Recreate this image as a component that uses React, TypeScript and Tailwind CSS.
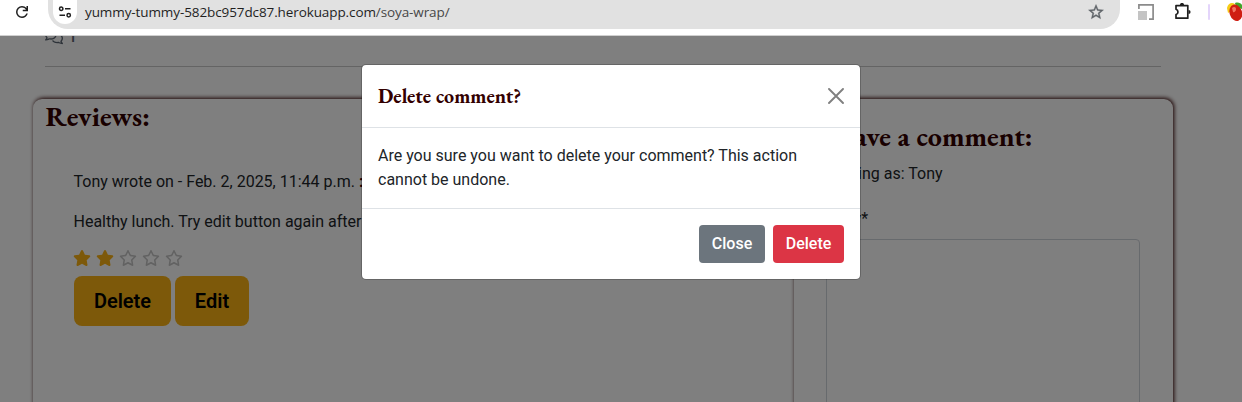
import type { ReactNode } from "react";
import { FaRegComments, FaRegStar, FaStar } from "react-icons/fa6";

const RATING = 2;

function BrowserBar() {
  return (
    <header className="relative flex h-9 shrink-0 items-start border-b border-[#d0d0d0] bg-white">
      <svg className="ml-[13px] mt-[3px] size-[18px] shrink-0" viewBox="0 0 24 24" fill="#1f1f1f">
        <path d="M12 20q-3.35 0-5.675-2.325T4 12q0-3.35 2.325-5.675T12 4q1.725 0 3.3.713T18 6.75V4h2v7h-7V9h4.2q-.8-1.4-2.188-2.2T12 6Q9.500 6 7.750 7.750T6 12q0 2.500 1.750 4.250T12 18q1.925 0 3.475-1.100T17.650 14h2.100q-.700 2.650-2.850 4.325T12 20Z" />
      </svg>
      <div className="ml-[17px] flex h-[29px] w-[1072px] shrink-0 items-start rounded-b-[20px] bg-[#e1e1e1]">
        <div className="ml-[5px] flex h-6 w-6 shrink-0 items-start justify-center rounded-b-full bg-white">
          <svg className="mt-[5px] h-[14px] w-[14px]" viewBox="0 0 14 14" fill="none" stroke="#1f1f1f" strokeWidth="1.500">
            <circle cx="3.200" cy="3.700" r="1.700" />
            <path d="M7 3.700h5.500M1.500 10.200h5.500" />
            <circle cx="10.700" cy="10.200" r="1.700" />
          </svg>
        </div>
        <p className="ml-2 mt-[3px] whitespace-nowrap font-['Open_Sans','Noto_Sans',sans-serif] text-[13.500px] leading-[19px] tracking-[-0.100px] text-[#1f1f1f]">
          yummy-tummy-582bc957dc87.herokuapp.com<span className="text-[#474747]">/soya-wrap/</span>
        </p>
        <svg className="ml-auto mr-[15px] mt-[3px] size-[18px]" viewBox="0 0 24 24" fill="#5f6368" stroke="#5f6368" strokeWidth=".5">
          <path d="m22 9.240-7.190-.620L12 2 9.190 8.630 2 9.240l5.460 4.730L5.820 21 12 17.270 18.180 21l-1.630-7.030L22 9.240zM12 15.400l-3.760 2.270 1-4.280-3.320-2.880 4.380-.380L12 6.100l1.710 4.040 4.380.380-3.320 2.880 1 4.280L12 15.400z" />
        </svg>
      </div>
      <svg className="ml-[18px] mt-1 h-4 w-4 shrink-0" viewBox="0 0 16 16">
        <path d="M.900 5V.900h14.200v14.200H11" fill="none" stroke="#8b8b8b" strokeWidth="1.700" />
        <rect x="0" y="7" width="9" height="9" fill="#c4c4c4" />
      </svg>
      <svg className="ml-[20px] mt-[3px] h-[17px] w-[18px] shrink-0" viewBox="0 0 18 17">
        <path d="M2 2.600h11.800v12.600H2v-3.700a2.700 2.700 0 0 0 0-5.200z" fill="none" stroke="#1f1f1f" strokeWidth="1.700" strokeLinejoin="round" />
        <path d="M5.900 2a2.100 2.100 0 0 1 4.200 0zM14.500 6.900a2.100 2.100 0 0 1 0 4.200z" fill="#1f1f1f" />
      </svg>
      <div className="ml-4 mt-1 h-4 w-[2px] shrink-0 rounded-full bg-[#e4d5fb]" />
      <svg className="ml-[17px] mt-[2px] h-5 w-[15px] shrink-0" viewBox="0 0 15 20">
        <path d="M0 6C1 1 5 0 8 2l-4 7-3 2z" fill="#f6cc16" />
        <path d="M8 1c3-1 6 0 7 2v4L9 5z" fill="#41a52b" />
        <ellipse cx="8.800" cy="10.700" rx="6.200" ry="8.500" fill="#cf1e12" transform="rotate(-18 9 10.700)" />
        <path d="M5 6c2-2 4-1 4 1s-2 4-3 3z" fill="#f27562" />
      </svg>
    </header>
  );
}

function Heading({ children, className }: { children: ReactNode; className: string }) {
  return (
    <h3 className={`whitespace-nowrap font-['EB_Garamond','Liberation_Serif',serif] font-bold text-[#330000] ${className}`}>
      {children}
    </h3>
  );
}

function ReviewButton({ label, className }: { label: string; className: string }) {
  return (
    <button className={`h-[50px] rounded-lg bg-[#fbb314] text-[20px] font-semibold text-black ${className}`}>
      {label}
    </button>
  );
}

function Reviews() {
  return (
    <section className="w-[760px] shrink-0 rounded-t-[9px] bg-white pl-[12.500px] shadow-[1px_-1px_4px_#330000]">
      <Heading className="text-[28px] leading-[34px]">Reviews:</Heading>
      <div className="pl-7 pt-[37px]">
        <p className="leading-6">
          Tony wrote on - Feb. 2, 2025, 11:44 p.m. <b className="text-[#330000]">:</b>
        </p>
        <p className="mt-4 leading-6">Healthy lunch. Try edit button again after update.</p>
        <div className="-ml-[0.500px] mt-4 flex h-4 gap-[5px]">
          {[1, 2, 3, 4, 5].map((n) =>
            n <= RATING ? (
              <FaStar key={n} className="h-4 w-[18px] text-[#fbb314]" />
            ) : (
              <FaRegStar key={n} className="h-4 w-[18px] text-[#c4c4c4]" />
            ),
          )}
        </div>
        <div className="ml-[0.500px] mt-[10px] flex gap-1">
          <ReviewButton label="Delete" className="w-[97px]" />
          <ReviewButton label="Edit" className="w-[74px]" />
        </div>
      </div>
    </section>
  );
}

function CommentForm() {
  return (
    <section className="relative w-[379px] shrink-0 rounded-t-[9px] bg-white pl-[32px] pr-8 shadow-[1px_-1px_4px_#330000]">
      <Heading className="pt-[20px] text-[28px] leading-[34px]">Leave a comment:</Heading>
      <p className="-ml-[0.500px] mt-[9px] leading-6">Posting as: Tony</p>
      <label className="-ml-[0.500px] mt-[21px] block leading-6">Body*</label>
      <div className="mt-[8px] h-[200px] w-[314px] rounded border border-[#ced4da] bg-white" />
    </section>
  );
}

function DeleteDialog() {
  return (
    <div
      role="dialog"
      className="absolute left-[361px] top-[64px] h-[216px] w-[500px] rounded-[5px] border border-black/20 bg-white bg-clip-padding"
    >
      <div className="flex h-[63px] items-center justify-between border-b border-[#dee2e6] px-4">
        <Heading className="text-[20px] leading-[30px]">Delete comment?</Heading>
        <svg className="size-4" viewBox="0 0 16 16" fill="none" stroke="#808080" strokeWidth="1.900" strokeLinecap="round">
          <path d="M1 1l14 14M15 1L1 15" />
        </svg>
      </div>
      <p className="h-[80px] p-4 leading-6">
        Are you sure you want to delete your comment? This action cannot be undone.
      </p>
      <div className="flex h-[71px] items-center justify-end gap-2 border-t border-[#dee2e6] px-4">
        <button className="h-[38px] w-[66px] rounded bg-[#6c757d] font-medium text-white">Close</button>
        <button className="h-[38px] w-[71px] rounded bg-[#dc3545] font-medium text-white">Delete</button>
      </div>
    </div>
  );
}

export default function App() {
  return (
    <div className="relative flex h-[402px] w-[1242px] flex-col overflow-hidden bg-white font-[Roboto,sans-serif] text-[16px] text-[#212529]">
      <BrowserBar />
      <main className="relative flex-1 overflow-hidden bg-white">
        <div className="ml-[45px] flex h-[31px] w-[1116px] items-start border-b border-[#c8c8c8]">
          <div className="-mt-[11px] flex h-6 items-center gap-[5px] text-[#5c6673]">
            <FaRegComments className="h-4 w-[18px]" />
            <span className="font-medium leading-6">1</span>
          </div>
        </div>
        <div className="ml-[33px] mt-[32px] flex h-[400px]">
          <Reviews />
          <div className="w-px shrink-0 bg-white" />
          <CommentForm />
        </div>
        <div className="absolute inset-0 bg-black/50" />
      </main>
      <DeleteDialog />
    </div>
  );
}
